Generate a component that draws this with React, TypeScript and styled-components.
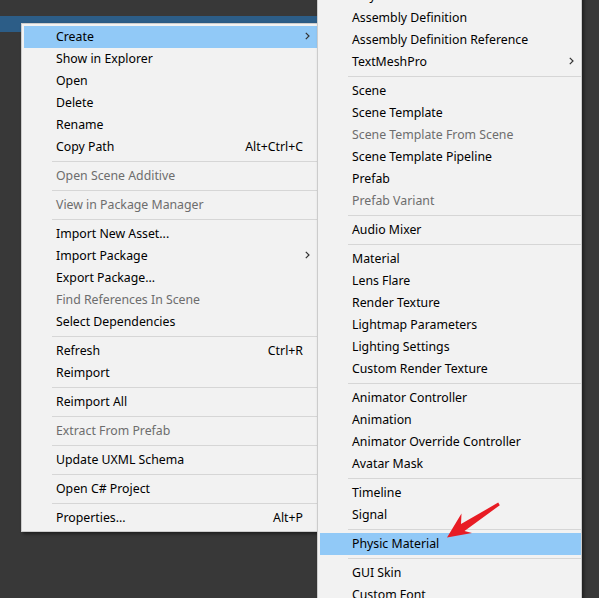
import React from "react";
import styled, { createGlobalStyle } from "styled-components";

const GlobalStyle = createGlobalStyle`
  html, body {
    margin: 0;
    padding: 0;
    height: 100%;
    overflow: hidden;
    background: #383838;
  }
  body {
    font-family: "Noto Sans", "Noto Sans CJK SC", sans-serif;
  }
`;

const Screen = styled.div`
  position: relative;
  width: 599px;
  height: 598px;
  overflow: hidden;
  background: #383838;
`;

const TopStrip = styled.div`
  height: 16px;
`;

const TitleBar = styled.div`
  height: 16px;
  width: 330px;
  background: #2c5d87;
`;

const MenuLayer = styled.div`
  display: flex;
  align-items: flex-start;
  margin-top: -9px;
  padding-left: 21px;
`;

const Panel = styled.div<{ $width: number; $offset?: number }>`
  flex-shrink: 0;
  box-sizing: border-box;
  width: ${(p) => p.$width}px;
  margin-top: ${(p) => p.$offset ?? 0}px;
  margin-left: ${(p) => (p.$offset ? -1 : 0)}px;
  padding: 2px 0 2px 2px;
  background: #f2f2f2;
  border: 1px solid #cccccc;
  box-shadow: 2px 2px 3px rgba(0, 0, 0, 0.45);
`;

const Row = styled.div<{ $active?: boolean; $disabled?: boolean }>`
  box-sizing: border-box;
  height: 22px;
  display: flex;
  align-items: center;
  padding: 0 7px 2px 32px;
  background: ${(p) => (p.$active ? "#91c9f7" : "transparent")};
  color: ${(p) => (p.$disabled ? "#6d6d6d" : "#000000")};
  font-size: 12.3px;
  white-space: nowrap;
`;

const Label = styled.span`
  flex: 1;
`;

const Shortcut = styled.span`
  margin-right: 7px;
`;

const Separator = styled.div`
  height: 7px;
  display: flex;
  align-items: center;
  padding-left: 28px;
  &::after {
    content: "";
    flex: 1;
    height: 1px;
    background: #d6d6d6;
  }
`;

const Pointer = styled.svg`
  position: absolute;
  left: 440px;
  top: 498px;
  pointer-events: none;
`;

type Item =
  | "-"
  | {
      label: string;
      shortcut?: string;
      disabled?: boolean;
      sub?: boolean;
      active?: boolean;
    };

const mainMenu: Item[] = [
  { label: "Create", sub: true, active: true },
  { label: "Show in Explorer" },
  { label: "Open" },
  { label: "Delete" },
  { label: "Rename" },
  { label: "Copy Path", shortcut: "Alt+Ctrl+C" },
  "-",
  { label: "Open Scene Additive", disabled: true },
  "-",
  { label: "View in Package Manager", disabled: true },
  "-",
  { label: "Import New Asset..." },
  { label: "Import Package", sub: true },
  { label: "Export Package..." },
  { label: "Find References In Scene", disabled: true },
  { label: "Select Dependencies" },
  "-",
  { label: "Refresh", shortcut: "Ctrl+R" },
  { label: "Reimport" },
  "-",
  { label: "Reimport All" },
  "-",
  { label: "Extract From Prefab", disabled: true },
  "-",
  { label: "Update UXML Schema" },
  "-",
  { label: "Open C# Project" },
  "-",
  { label: "Properties...", shortcut: "Alt+P" },
];

const createMenu: Item[] = [
  { label: "Playables", sub: true },
  { label: "Assembly Definition" },
  { label: "Assembly Definition Reference" },
  { label: "TextMeshPro", sub: true },
  "-",
  { label: "Scene" },
  { label: "Scene Template" },
  { label: "Scene Template From Scene", disabled: true },
  { label: "Scene Template Pipeline" },
  { label: "Prefab" },
  { label: "Prefab Variant", disabled: true },
  "-",
  { label: "Audio Mixer" },
  "-",
  { label: "Material" },
  { label: "Lens Flare" },
  { label: "Render Texture" },
  { label: "Lightmap Parameters" },
  { label: "Lighting Settings" },
  { label: "Custom Render Texture" },
  "-",
  { label: "Animator Controller" },
  { label: "Animation" },
  { label: "Animator Override Controller" },
  { label: "Avatar Mask" },
  "-",
  { label: "Timeline" },
  { label: "Signal" },
  "-",
  { label: "Physic Material", active: true },
  "-",
  { label: "GUI Skin" },
  { label: "Custom Font" },
  { label: "UI Toolkit", sub: true },
];

const Chevron = () => (
  <svg width="5" height="8" viewBox="0 0 5 8">
    <polyline points="0.8,0.8 4,4 0.8,7.2" fill="none" stroke="#333" strokeWidth="1.2" />
  </svg>
);

const MenuList = ({ items }: { items: Item[] }) => (
  <>
    {items.map((it, i) =>
      it === "-" ? (
        <Separator key={i} />
      ) : (
        <Row key={i} $active={it.active} $disabled={it.disabled}>
          <Label>{it.label}</Label>
          {it.shortcut && <Shortcut>{it.shortcut}</Shortcut>}
          {it.sub && <Chevron />}
        </Row>
      )
    )}
  </>
);

const App = () => {
  return (
    <Screen>
      <GlobalStyle />
      <TopStrip />
      <TitleBar />
      <MenuLayer>
        <Panel $width={297}>
          <MenuList items={mainMenu} />
        </Panel>
        <Panel $width={265} $offset={-41}>
          <MenuList items={createMenu} />
        </Panel>
      </MenuLayer>
      <Pointer width="66" height="44" viewBox="440 498 66 44">
        <polygon
          points="447,537.5 461.5,513.5 461,524 498.2,502.6 499.8,505.2 464.5,531 472,533"
          fill="#e81c24"
        />
      </Pointer>
    </Screen>
  );
};

export default App;
